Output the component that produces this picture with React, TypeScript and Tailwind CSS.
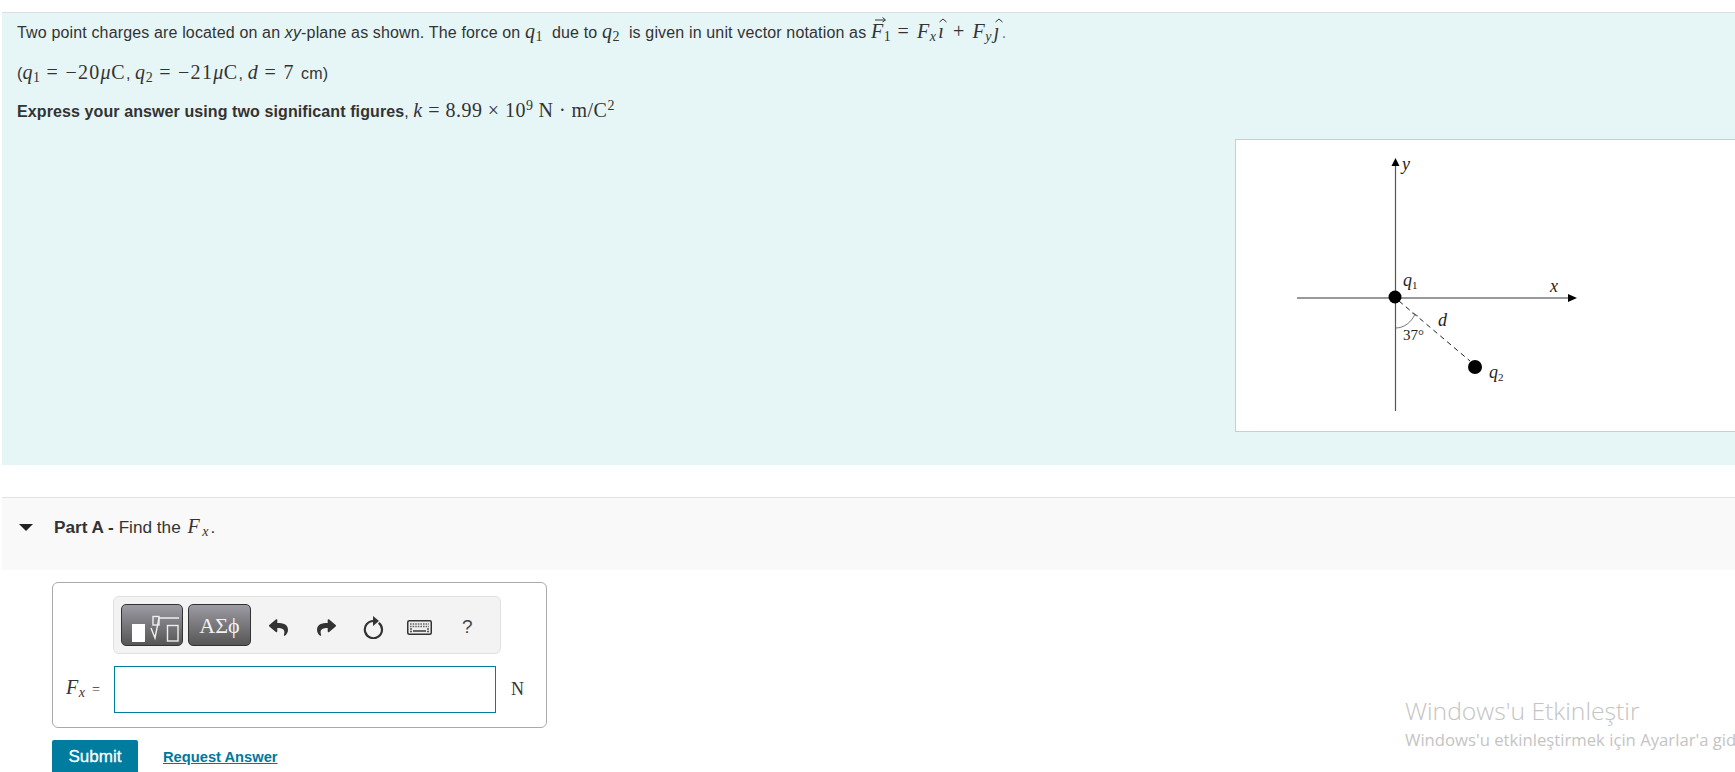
import React from 'react';
import { FaReply, FaShare } from 'react-icons/fa';

const mathFont = "font-['Liberation_Serif',serif]";

function V({ children }: { children: React.ReactNode }) {
  return <i className={`${mathFont} text-[20px] tracking-[0.6px]`}>{children}</i>;
}

function R({ children, className = 'tracking-[0.8px]' }: { children: React.ReactNode; className?: string }) {
  return <span className={`${mathFont} text-[20px] ${className}`}>{children}</span>;
}

function Sub({ children, italic }: { children: React.ReactNode; italic?: boolean }) {
  return (
    <span className={`${mathFont} relative top-[3px] text-[14px] leading-none ${italic ? 'italic' : ''}`}>
      {children}
    </span>
  );
}

function Sup({ children }: { children: React.ReactNode }) {
  return <span className={`${mathFont} relative top-[-7px] text-[14px] leading-none`}>{children}</span>;
}

function Hat({ children }: { children: React.ReactNode }) {
  return (
    <span className="relative mx-[2px] inline-block">
      <V>{children}</V>
      <svg className="absolute left-[1px] top-[-1px]" width="8" height="5" viewBox="0 0 8 5">
        <path d="M0.5 4 4 1l3.5 3" fill="none" stroke="#333" strokeWidth="1" />
      </svg>
    </span>
  );
}

function VectorF() {
  return (
    <span className="relative inline-block">
      <V>F</V>
      <svg className="absolute left-[3px] top-[-3px]" width="13" height="7" viewBox="0 0 13 7">
        <path d="M1 4h10M8.5 1.5 11.5 4 8.5 6" fill="none" stroke="#333" strokeWidth="1" />
      </svg>
    </span>
  );
}

function RefreshIcon() {
  return (
    <svg width="22" height="24" viewBox="0 0 22 24">
      <path d="M10.5 6a8.6 8.6 0 1 0 5.2 1.8" fill="none" stroke="#333" strokeWidth="2.2" />
      <path d="M10 1v10l6-5z" fill="#333" />
    </svg>
  );
}

function KeyboardIcon() {
  return (
    <svg width="25" height="15" viewBox="0 0 25 15">
      <rect x="0.75" y="0.75" width="23.5" height="13.5" rx="1.5" fill="#eee" stroke="#333" strokeWidth="1.5" />
      <path d="M3 4h19M3 6.5h19" stroke="#666" strokeWidth="1.4" strokeDasharray="1.6 1" />
      <path d="M3 9h2M20 9h2M3 11.5h2M20 11.5h2" stroke="#555" strokeWidth="1.4" />
      <path d="M6 11h13" stroke="#444" strokeWidth="1.6" />
    </svg>
  );
}

function TemplatesIcon() {
  return (
    <svg width="58" height="36" viewBox="0 0 58 36" className="overflow-visible">
      <rect x="9" y="17" width="13" height="18" fill="#fff" />
      <rect x="30" y="9.5" width="6" height="8.5" fill="none" stroke="#eee" strokeWidth="1.4" />
      <path d="M28 21l4 10 4-20h20" fill="none" stroke="#eee" strokeWidth="1.4" />
      <rect x="44.5" y="18.5" width="10.5" height="15.5" fill="none" stroke="#eee" strokeWidth="1.4" />
    </svg>
  );
}

function Diagram() {
  const label = { fontFamily: "'Liberation Serif', serif", fill: '#222' };
  return (
    <svg width="499" height="291" viewBox="1236 140 499 291">
      <line x1="1395.5" y1="163" x2="1395.5" y2="411" stroke="#555" strokeWidth="1.2" />
      <path d="M1395.5 158l-4 8h8z" fill="#000" />
      <line x1="1297" y1="298" x2="1569" y2="298" stroke="#999" strokeWidth="2" />
      <path d="M1577 298l-9-4v8z" fill="#000" />
      <line x1="1399" y1="301" x2="1470" y2="361" stroke="#222" strokeWidth="1" strokeDasharray="5 4" />
      <path d="M1395.5 328c9 0 16-6 19.5-14M1412 313l6 3" fill="none" stroke="#555" strokeWidth="0.8" />
      <circle cx="1395" cy="297" r="6.5" fill="#000" />
      <circle cx="1475" cy="367" r="7" fill="#000" />
      <text x="1402" y="170" fontSize="18" fontStyle="italic" style={label}>y</text>
      <text x="1403" y="286" fontSize="18" fontStyle="italic" style={label}>q</text>
      <text x="1412" y="289" fontSize="11" style={label}>1</text>
      <text x="1550" y="292" fontSize="18" fontStyle="italic" style={label}>x</text>
      <text x="1438" y="326" fontSize="18" fontStyle="italic" style={label}>d</text>
      <text x="1403" y="340" fontSize="15" style={label}>37°</text>
      <text x="1489" y="378" fontSize="18" fontStyle="italic" style={label}>q</text>
      <text x="1498" y="381" fontSize="11" style={label}>2</text>
    </svg>
  );
}

export default function App() {
  return (
    <div className="relative h-[772px] overflow-hidden bg-white pt-[12px] font-['Liberation_Sans',sans-serif] text-[#333]">
      <div className="ml-[2px] h-[453px] border-t border-[#dfdfdf] bg-[#e6f6f6] pt-[6px]">
        <div className="h-[24px] whitespace-pre pl-[15px] text-[16px] leading-[24px] tracking-[0.15px]">
          <span>Two point charges are located on an <em>xy</em>-plane as shown. The force on </span>
          <V>q</V>
          <Sub>1</Sub>
          <span>  due to </span>
          <V>q</V>
          <Sub>2</Sub>
          <span>  is given in unit vector notation as </span>
          <VectorF />
          <Sub>1</Sub>
          <R className="tracking-[1.6px]"> = </R>
          <V>F</V>
          <Sub italic>x</Sub>
          <Hat>ı</Hat>
          <R className="tracking-[1.6px]"> + </R>
          <V>F</V>
          <Sub italic>y</Sub>
          <Hat>ȷ</Hat>
          <span className="text-[#777]">.</span>
        </div>
        <div className="mt-[17px] h-[24px] whitespace-pre pl-[15px] text-[16px] leading-[24px] tracking-[0.15px]">
          <span>(</span>
          <V>q</V>
          <Sub>1</Sub>
          <R className="tracking-[1.3px]"> = −20</R>
          <V>μ</V>
          <R className="tracking-[1.3px]">C</R>
          <span>, </span>
          <V>q</V>
          <Sub>2</Sub>
          <R className="tracking-[1.3px]"> = −21</R>
          <V>μ</V>
          <R className="tracking-[1.3px]">C</R>
          <span>, </span>
          <V>d</V>
          <R className="tracking-[1.3px]"> = 7 </R>
          <span>cm)</span>
        </div>
        <div className="mt-[14px] h-[24px] whitespace-pre pl-[15px] text-[16px] leading-[24px] tracking-[0.1px]">
          <b>Express your answer using two significant figures</b>
          <span>, </span>
          <V>k</V>
          <R className="tracking-[0.47px]"> = 8.99 × 10</R>
          <Sup>9</Sup>
          <R className="tracking-[0.47px]"> N · m/C</R>
          <Sup>2</Sup>
        </div>
        <div className="ml-auto mt-[17px] h-[293px] w-[500px] border border-r-0 border-[#b5d3e0] bg-white">
          <Diagram />
        </div>
      </div>

      <div className="ml-[2px] mt-[32px] flex h-[73px] items-start border-t border-[#e2e2e2] bg-[#f9f9f9] pl-[17px] pt-[16px]">
        <div className="mt-[10px] h-0 w-0 border-x-[7px] border-t-[7px] border-x-transparent border-t-[#222]" />
        <div className="ml-[21px] h-[24px] whitespace-pre text-[17.2px] leading-[24px]">
          <b>Part A - </b>
          <span>Find the </span>
          <span className="mx-[2px]"><V>F</V></span>
          <Sub italic>x</Sub>
          <span className="ml-[2px]">.</span>
        </div>
      </div>

      <div className="ml-[52px] mt-[12px] h-[146px] w-[495px] rounded-[6px] border border-[#aaa] pl-[60px] pt-[13px]">
        <div className="flex h-[58px] w-[388px] items-center rounded-[6px] border border-[#e0e0e0] bg-[#f3f3f3] pl-[7px]">
          <div className="flex h-[42px] w-[62px] items-center justify-center rounded-[5px] border border-[#333] bg-gradient-to-b from-[#9d9ba4] to-[#565656]">
            <TemplatesIcon />
          </div>
          <div className={`${mathFont} ml-[5px] flex h-[42px] w-[63px] items-center justify-center rounded-[5px] border border-[#333] bg-gradient-to-b from-[#9d9ba4] to-[#565656] text-[22px] text-[#f2f2f2]`}>
            ΑΣϕ
          </div>
          <FaReply className="ml-[18px] mt-[5px] h-[19px] w-[19px] text-[#333]" />
          <FaShare className="ml-[29px] mt-[5px] h-[19px] w-[19px] text-[#333]" />
          <div className="ml-[27px] mt-[4px] flex w-[22px] justify-center">
            <RefreshIcon />
          </div>
          <div className="ml-[22px] mt-[5px]">
            <KeyboardIcon />
          </div>
          <span className="ml-[30px] mt-[4px] text-[19px] text-[#444]">?</span>
        </div>
        <div className="relative mt-[12px] flex items-center">
          <div className="absolute left-[-47px] top-[9px] whitespace-pre text-[14px] leading-[24px]">
            <V>F</V>
            <Sub italic>x</Sub>
            <span className={mathFont}>  =</span>
          </div>
          <input className="ml-[1px] h-[47px] w-[382px] border border-[#007c9e] bg-white outline-none" aria-label="Fx" />
          <span className={`${mathFont} ml-[15px] text-[18px] text-[#333]`}>N</span>
        </div>
      </div>

      <div className="ml-[52px] mt-[12px] flex items-center">
        <button className="h-[40px] w-[86px] rounded-t-[2px] bg-[#007c9e] pb-[6px] text-[17px] text-white [-webkit-text-stroke:0.3px_white]">Submit</button>
        <a className="ml-[25px] pb-[6px] text-[14.7px] font-bold text-[#00789c] underline" href="#">Request Answer</a>
      </div>

      <div className="absolute left-[1405px] top-[694px] whitespace-nowrap font-['Open_Sans',sans-serif] text-[#c4c4c4]">
        <div className="text-[24.7px] font-light leading-[34px]">Windows'u Etkinleştir</div>
        <div className="text-[16.7px] leading-[24px]">Windows'u etkinleştirmek için Ayarlar'a gidin.</div>
      </div>
    </div>
  );
}
